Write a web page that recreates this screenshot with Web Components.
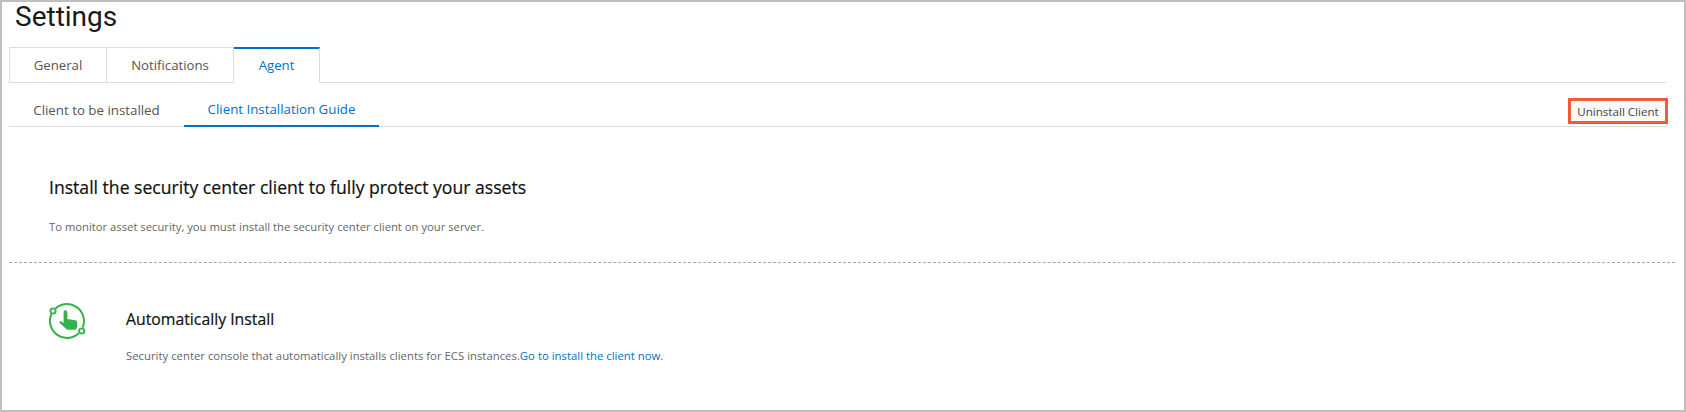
<!DOCTYPE html>
<html>
<head>
<meta charset="utf-8">
<style>
  html, body { margin: 0; padding: 0; background: #fff; }
  body { font-family: "Open Sans", "Noto Sans", sans-serif; }
</style>
</head>
<body>
<settings-page></settings-page>

<script>
class TabStrip extends HTMLElement {
  constructor() {
    super();
    this.attachShadow({ mode: "open" }).innerHTML = `
      <style>
        :host { display: flex; height: 35px; margin: 0 18px 0 7px; border-bottom: 1px solid #dcdcdc; }
      </style>
      <slot></slot>`;
  }
}
class TabItem extends HTMLElement {
  constructor() {
    super();
    this.attachShadow({ mode: "open" }).innerHTML = `
      <style>
        :host { display: flex; align-items: center; justify-content: center; box-sizing: border-box; height: 36px;
          border: 1px solid #dcdcdc; border-left-width: 0; font-size: 13.2px; color: #555; }
        :host(:first-child) { border-left-width: 1px; }
        :host([active]) { color: #0070cc; border-top: 2px solid #0070cc; border-bottom-color: #fff; padding-bottom: 2px; }
      </style>
      <slot></slot>`;
  }
}
class SubTabs extends HTMLElement {
  constructor() {
    super();
    this.attachShadow({ mode: "open" }).innerHTML = `
      <style>
        :host { display: flex; align-items: stretch; height: 43px; margin: 0 18px 0 7px; border-bottom: 1px solid #dcdcdc; }
        .end { margin-left: auto; padding-top: 15px; }
      </style>
      <slot></slot>
      <div class="end"><slot name="end"></slot></div>`;
  }
}
class SubTab extends HTMLElement {
  constructor() {
    super();
    this.attachShadow({ mode: "open" }).innerHTML = `
      <style>
        :host { display: flex; align-items: center; justify-content: center; box-sizing: border-box; height: 44px; font-size: 13.3px; color: #555; padding-top: 10px; }
        :host([active]) { color: #0070cc; border-bottom: 2px solid #0070cc; }
      </style>
      <slot></slot>`;
  }
}
class UninstallButton extends HTMLElement {
  constructor() {
    super();
    this.attachShadow({ mode: "open" }).innerHTML = `
      <style>
        :host { display: flex; align-items: center; justify-content: center; box-sizing: border-box; width: 100px; height: 26px;
          margin-right: -2px; border: 3px solid #f05a36; background: #fafafa; font-size: 11.6px; color: #444; }
      </style>
      <slot></slot>`;
  }
}
class SettingsPage extends HTMLElement {
  constructor() {
    super();
    this.attachShadow({ mode: "open" }).innerHTML = `
      <style>
        :host { display: block; box-sizing: border-box; width: 1686px; height: 412px; border: 2px solid #bfbfbf; overflow: hidden; background: #fff; }
        h1 { margin: 0 0 0 13px; font-family: Roboto, sans-serif; font-size: 28px; line-height: 29px; height: 45px; font-weight: 400; color: #1a1a1a; }
        tab-item.general { width: 98px; }
        tab-item.notif { width: 127px; }
        tab-item.agent { width: 86px; }
        sub-tab.todo { width: 175px; }
        sub-tab.guide { width: 195px; }
        .intro { padding: 48px 0 0 47px; height: 87px; }
        .intro h2 { margin: 0; font-size: 17.6px; line-height: 24px; font-weight: 400; color: #111; -webkit-text-stroke: 0.2px #111; }
        .intro p { margin: 20px 0 0 0; font-size: 11.25px; line-height: 16px; color: #666; }
        .dash { margin: 0 9px 0 7px; border-top: 1px dashed #a8a8a8; }
        .auto { padding: 38px 0 0 45px; display: flex; }
        .auto svg { flex: none; margin-right: 39px; }
        .auto h2 { margin: 0; padding-top: 7px; font-size: 15.8px; line-height: 22px; font-weight: 400; color: #111; -webkit-text-stroke: 0.2px #111; }
        .auto p { margin: 18px 0 0 0; font-size: 11.35px; line-height: 16px; color: #666; }
        a { color: #0070cc; text-decoration: none; }
      </style>
      <h1>Settings</h1>
      <tab-strip>
        <tab-item class="general">General</tab-item>
        <tab-item class="notif">Notifications</tab-item>
        <tab-item class="agent" active>Agent</tab-item>
      </tab-strip>
      <sub-tabs>
        <sub-tab class="todo">Client to be installed</sub-tab>
        <sub-tab class="guide" active>Client Installation Guide</sub-tab>
        <uninstall-button slot="end">Uninstall Client</uninstall-button>
      </sub-tabs>
      <div class="intro">
        <h2>Install the security center client to fully protect your assets</h2>
        <p>To monitor asset security, you must install the security center client on your server.</p>
      </div>
      <div class="dash"></div>
      <div class="auto">
        <svg width="40" height="40" viewBox="0 0 40 40" fill="none">
          <path d="M8.5 7.5A17 17 0 0 1 35.7 26.5M31.7 32.3A17 17 0 0 1 4.4 13.2" stroke="#35b34a" stroke-width="2"/>
          <circle cx="6" cy="10" r="2.6" stroke="#35b34a" stroke-width="1.9"/>
          <circle cx="34.7" cy="30" r="2.6" stroke="#35b34a" stroke-width="1.9"/>
          <path d="M16.6 11.2a1.9 1.9 0 0 1 3.8 0V18l8 1.3c1 .2 1.8 1 1.8 2V26l-1.3 2.7H20l-7.8-7.2 1.2-1.4 3.2 1.8Z" fill="#35b34a"/>
        </svg>
        <div>
          <h2>Automatically Install</h2>
          <p>Security center console that automatically installs clients for ECS instances.<a>Go to install the client now.</a></p>
        </div>
      </div>`;
  }
}
customElements.define("tab-strip", TabStrip);
customElements.define("tab-item", TabItem);
customElements.define("sub-tabs", SubTabs);
customElements.define("sub-tab", SubTab);
customElements.define("uninstall-button", UninstallButton);
customElements.define("settings-page", SettingsPage);
</script>
</body>
</html>
